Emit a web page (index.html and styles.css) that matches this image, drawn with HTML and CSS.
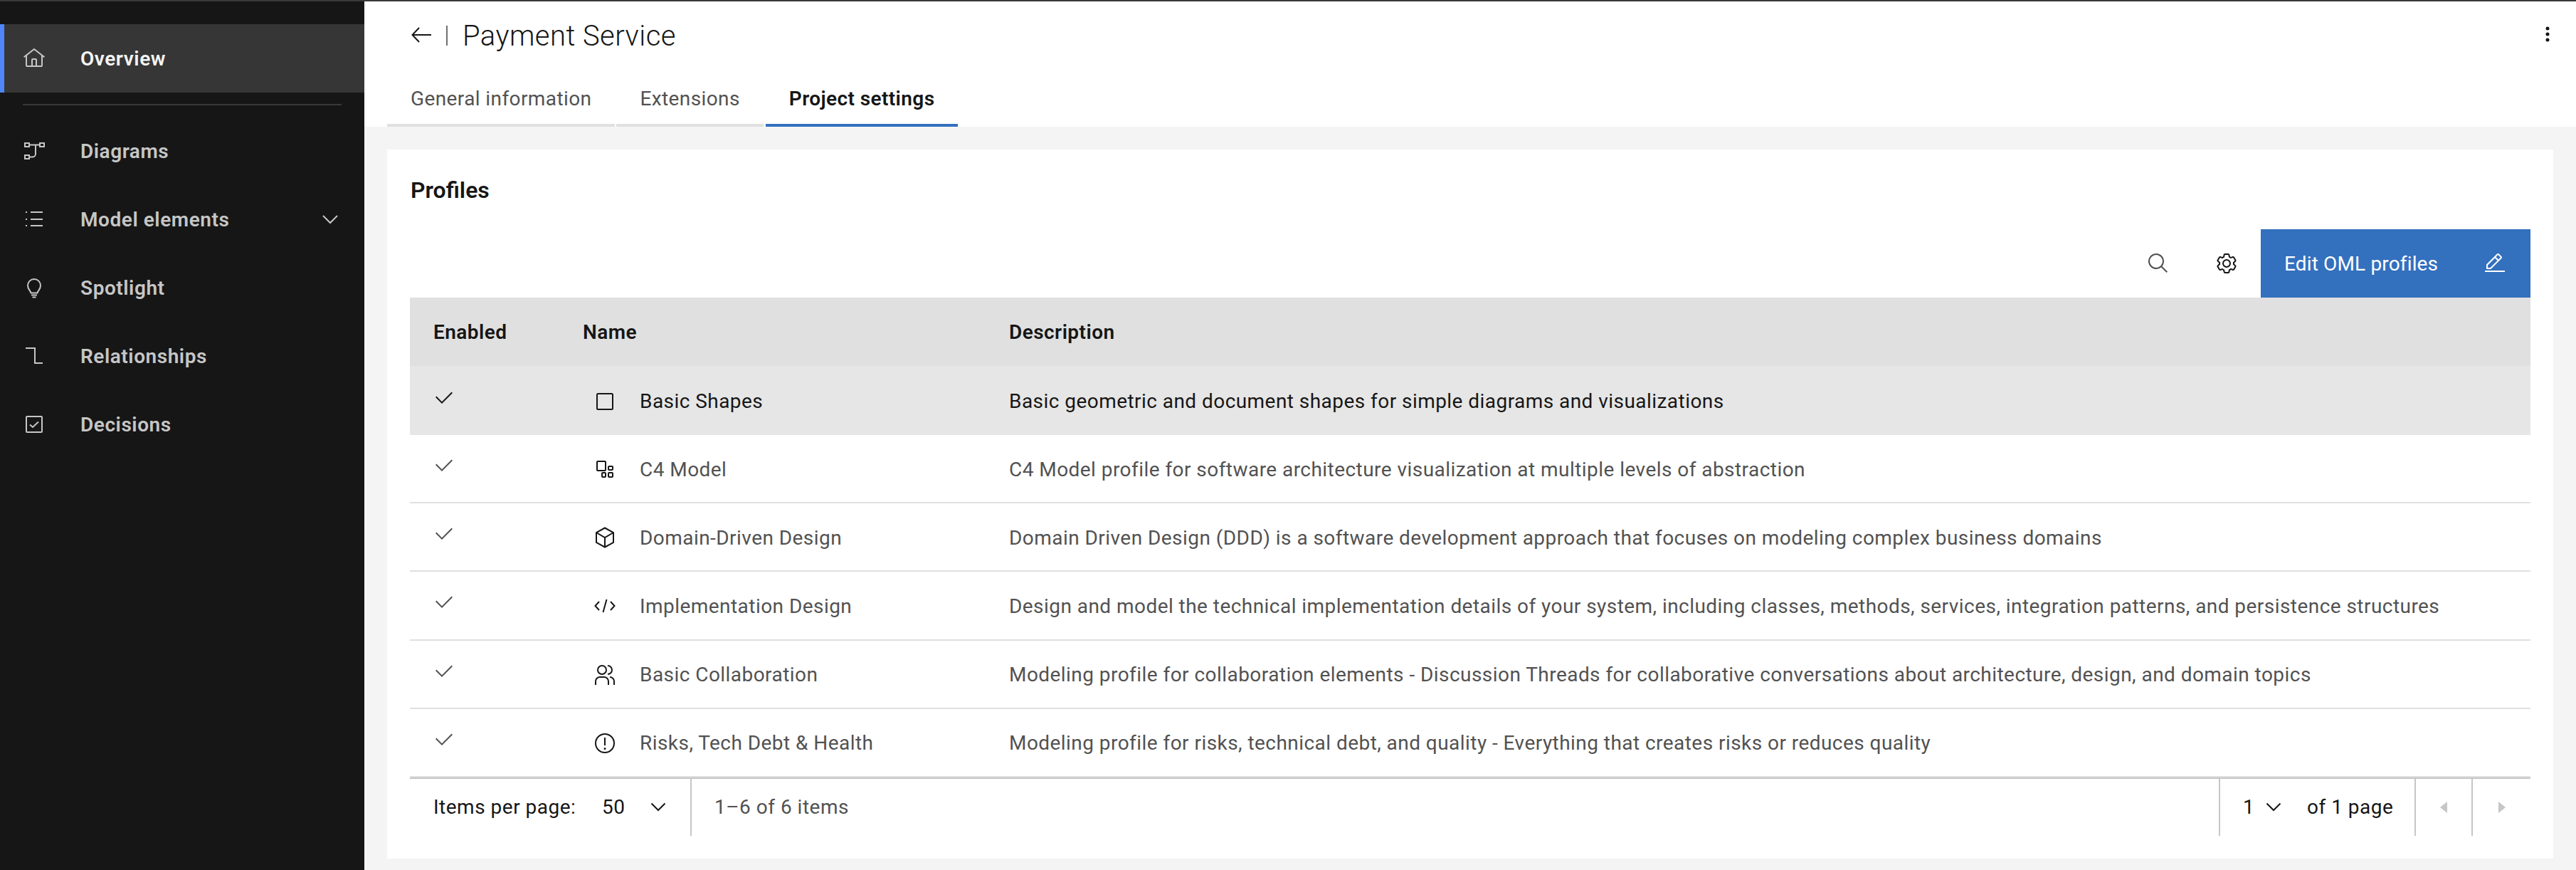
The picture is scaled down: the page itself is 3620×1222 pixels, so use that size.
FILE: index.html
```html
<!DOCTYPE html>
<html lang="en">
<head>
<meta charset="utf-8">
<title>Payment Service</title>
<link rel="stylesheet" href="styles.css">
</head>
<body>
<div class="app">
  <nav class="sidebar">
    <a class="nav-item active">
      <svg class="nav-icon" viewBox="0 0 32 32"><path class="fill" d="M16.612 2.214a1.01 1.01 0 0 0-1.242 0L1 13.419l1.243 1.572L4 13.621V26a2.004 2.004 0 0 0 2 2h20a2.004 2.004 0 0 0 2-2V13.63L29.757 15 31 13.428zM18 26h-4v-8h4zm2 0v-8a2.002 2.002 0 0 0-2-2h-4a2.002 2.002 0 0 0-2 2v8H6V12.062l10-7.79 10 7.8V26z"/></svg>
      <span>Overview</span>
    </a>
    <div class="nav-divider"></div>
    <a class="nav-item">
      <svg class="nav-icon" viewBox="0 0 32 32"><g class="line"><rect x="3" y="5" width="6" height="5"/><rect x="24" y="5" width="6" height="5"/><rect x="3" y="22" width="6" height="5"/><path d="M9 7.5H24M18 7.5V20a4.500 4.500 0 0 1-4.500 4.500H9"/></g></svg>
      <span>Diagrams</span>
    </a>
    <a class="nav-item">
      <svg class="nav-icon" viewBox="0 0 32 32"><g class="line"><path d="M11 6H28M11 16H28M11 25H28M4 6H6M4 16H6M4 25H6"/></g></svg>
      <span>Model elements</span>
      <svg class="nav-chevron" viewBox="0 0 24 14"><path class="line" d="M2 2L12 12L22 2"/></svg>
    </a>
    <a class="nav-item">
      <svg class="nav-icon" viewBox="0 0 32 32"><g class="line"><path d="M11.500 23.500C11 20.500 7 18.500 7 13a9 9 0 0 1 18 0C25 18.500 21 20.500 20.500 23.500Z"/><path d="M12 26.500H20M13.500 29.500H18.500"/></g></svg>
      <span>Spotlight</span>
    </a>
    <a class="nav-item">
      <svg class="nav-icon" viewBox="0 0 32 32"><path class="line" d="M4 5H17V26H28"/></svg>
      <span>Relationships</span>
    </a>
    <a class="nav-item">
      <svg class="nav-icon" viewBox="0 0 32 32"><g class="line"><rect x="5" y="5" width="22" height="22" rx="1"/><path d="M10 16.500L14 20L22 12.500"/></g></svg>
      <span>Decisions</span>
    </a>
  </nav>

  <div class="main">
    <header class="page-header">
      <div class="title-row">
        <svg class="back" viewBox="0 0 28 22"><path class="line dark" d="M28 11H2M11 1L1.500 11L11 21"/></svg>
        <span class="title-sep"></span>
        <h1 class="title">Payment Service</h1>
        <svg class="kebab" viewBox="0 0 6 22"><circle cx="3" cy="3" r="2.500"/><circle cx="3" cy="11" r="2.500"/><circle cx="3" cy="19" r="2.500"/></svg>
      </div>
      <div class="tabs">
        <a class="tab">General information</a>
        <a class="tab">Extensions</a>
        <a class="tab selected">Project settings</a>
      </div>
    </header>

    <div class="content">
      <section class="card">
        <h2 class="card-title">Profiles</h2>
        <div class="toolbar">
          <button class="tool-btn">
            <svg class="ico" viewBox="0 0 32 32"><path class="fill-gray" d="M29 27.586l-7.552-7.552a11.018 11.018 0 1 0-1.414 1.414L27.586 29zM4 13a9 9 0 1 1 9 9 9.01 9.01 0 0 1-9-9z"/></svg>
          </button>
          <button class="tool-btn">
            <svg class="ico" viewBox="0 0 32 32"><path class="fill-dark" d="M27 16.760c0-.25 0-.5 0-.76s0-.51 0-.77l1.920-1.680A2 2 0 0 0 29.300 11L26.940 7a2 2 0 0 0-1.730-1 2 2 0 0 0-.64.100l-2.430.820a11.350 11.350 0 0 0-1.310-.750l-.51-2.520a2 2 0 0 0-2-1.610h-4.680a2 2 0 0 0-2 1.610l-.51 2.520a11.480 11.480 0 0 0-1.320.750l-2.380-.860A2 2 0 0 0 6.790 6a2 2 0 0 0-1.730 1L2.700 11a2 2 0 0 0 .41 2.510L5 15.240c0 .25 0 .5 0 .76s0 .51 0 .77l-1.920 1.680A2 2 0 0 0 2.700 21l2.360 4a2 2 0 0 0 1.730 1 2 2 0 0 0 .64-.1l2.430-.82a11.350 11.350 0 0 0 1.310.750l.51 2.520a2 2 0 0 0 2 1.610h4.720a2 2 0 0 0 2-1.610l.51-2.520a11.480 11.480 0 0 0 1.320-.750l2.420.820a2 2 0 0 0 .64.1 2 2 0 0 0 1.730-1l2.280-4a2 2 0 0 0-.41-2.510ZM25.210 24l-3.430-1.160a8.860 8.860 0 0 1-2.710 1.570L18.360 28H13.640l-.71-3.550a9.360 9.360 0 0 1-2.700-1.570L6.790 24 4.430 20l2.720-2.400a8.900 8.900 0 0 1 0-3.130L4.430 12 6.790 8l3.430 1.160a8.860 8.860 0 0 1 2.710-1.570L13.640 4h4.720l.71 3.550a9.360 9.360 0 0 1 2.700 1.570L25.210 8l2.360 4-2.720 2.400a8.900 8.900 0 0 1 0 3.130L27.570 20Z"/><path class="fill-dark" d="M16 22a6 6 0 1 1 6-6A5.940 5.940 0 0 1 16 22Zm0-10a3.910 3.910 0 0 0-4 4 3.910 3.910 0 0 0 4 4 3.910 3.910 0 0 0 4-4A3.910 3.910 0 0 0 16 12Z"/></svg>
          </button>
          <button class="primary-btn">
            <span>Edit OML profiles</span>
            <svg class="ico" viewBox="0 0 32 32"><path class="fill-white" d="M2 26h28v2H2zM25.400 9c.8-.8.8-2 0-2.800l-3.600-3.600c-.8-.8-2-.8-2.800 0l-15 15V24h6.400l15-15zm-5-5L24 7.600l-3 3L17.400 7l3-3zM6 22v-3.600l10-10 3.600 3.600-10 10H6z"/></svg>
          </button>
        </div>

        <div class="table">
          <div class="row head">
            <div class="cell-en">Enabled</div>
            <div class="cell-name">Name</div>
            <div>Description</div>
          </div>

          <div class="row hover">
            <div class="cell-en"><svg class="ico check" viewBox="0 0 32 32"><path d="M13 24l-9-9 1.410-1.410L13 21.170 26.590 7.590 28 9z"/></svg></div>
            <div class="cell-name"><svg class="ico pi" viewBox="0 0 32 32"><rect class="line dark" x="5" y="5" width="22" height="22" rx="1.500"/></svg><span>Basic Shapes</span></div>
            <div>Basic geometric and document shapes for simple diagrams and visualizations</div>
          </div>

          <div class="row">
            <div class="cell-en"><svg class="ico check" viewBox="0 0 32 32"><path d="M13 24l-9-9 1.410-1.410L13 21.170 26.590 7.590 28 9z"/></svg></div>
            <div class="cell-name"><svg class="ico pi" viewBox="0 0 32 32"><g class="line dark"><rect x="5" y="5" width="12" height="13" rx="1"/><rect x="21" y="12" width="6" height="5" rx="1"/><rect x="12" y="21" width="5" height="6" rx="1"/><rect x="21" y="21" width="6" height="6" rx="1"/></g></svg><span>C4 Model</span></div>
            <div>C4 Model profile for software architecture visualization at multiple levels of abstraction</div>
          </div>

          <div class="row">
            <div class="cell-en"><svg class="ico check" viewBox="0 0 32 32"><path d="M13 24l-9-9 1.410-1.410L13 21.170 26.590 7.590 28 9z"/></svg></div>
            <div class="cell-name"><svg class="ico pi" viewBox="0 0 32 32"><g class="line dark"><path d="M16 2.500L28 9V23L16 29.500L4 23V9Z"/><path d="M4 9L16 16L28 9M16 16V29.500"/></g></svg><span>Domain-Driven Design</span></div>
            <div>Domain Driven Design (DDD) is a software development approach that focuses on modeling complex business domains</div>
          </div>

          <div class="row">
            <div class="cell-en"><svg class="ico check" viewBox="0 0 32 32"><path d="M13 24l-9-9 1.410-1.410L13 21.170 26.590 7.590 28 9z"/></svg></div>
            <div class="cell-name"><svg class="ico pi" viewBox="0 0 32 32"><g class="line dark"><path d="M8 10L2.500 16L8 22M24 10L29.500 16L24 22M18.500 7L13.500 25"/></g></svg><span>Implementation Design</span></div>
            <div>Design and model the technical implementation details of your system, including classes, methods, services, integration patterns, and persistence structures</div>
          </div>

          <div class="row">
            <div class="cell-en"><svg class="ico check" viewBox="0 0 32 32"><path d="M13 24l-9-9 1.410-1.410L13 21.170 26.590 7.590 28 9z"/></svg></div>
            <div class="cell-name"><svg class="ico pi" viewBox="0 0 32 32"><path class="fill-dark" d="M30 30h-2v-5a5.006 5.006 0 0 0-5-5v-2a7.008 7.008 0 0 1 7 7zM22 30h-2v-5a5.006 5.006 0 0 0-5-5H9a5.006 5.006 0 0 0-5 5v5H2v-5a7.008 7.008 0 0 1 7-7h6a7.008 7.008 0 0 1 7 7zM20 2v2a5 5 0 0 1 0 10v2a7 7 0 0 0 0-14zM12 4a5 5 0 1 1-5 5 5 5 0 0 1 5-5m0-2a7 7 0 1 0 7 7 7 7 0 0 0-7-7z"/></svg><span>Basic Collaboration</span></div>
            <div>Modeling profile for collaboration elements - Discussion Threads for collaborative conversations about architecture, design, and domain topics</div>
          </div>

          <div class="row">
            <div class="cell-en"><svg class="ico check" viewBox="0 0 32 32"><path d="M13 24l-9-9 1.410-1.410L13 21.170 26.590 7.590 28 9z"/></svg></div>
            <div class="cell-name"><svg class="ico pi" viewBox="0 0 32 32"><path class="fill-dark" d="M16 2a14 14 0 1 0 14 14A14 14 0 0 0 16 2zm0 26a12 12 0 1 1 12-12 12 12 0 0 1-12 12z"/><path class="fill-dark" d="M15 8h2v11h-2zM16 22a1.500 1.500 0 1 0 1.500 1.500A1.500 1.500 0 0 0 16 22z"/></svg><span>Risks, Tech Debt &amp; Health</span></div>
            <div>Modeling profile for risks, technical debt, and quality - Everything that creates risks or reduces quality</div>
          </div>
        </div>

        <footer class="pager">
          <div class="pager-size">
            <span class="pager-label">Items per page:</span>
            <span class="pager-value">50</span>
            <svg class="pager-chev" viewBox="0 0 22 13"><path class="line dark" d="M1.500 1.500L11 11L20.500 1.500"/></svg>
          </div>
          <div class="pager-count">1–6 of 6 items</div>
          <div class="pager-page">
            <span class="pager-num">1</span>
            <svg class="pager-chev" viewBox="0 0 22 13"><path class="line dark" d="M1.500 1.500L11 11L20.500 1.500"/></svg>
            <span class="pager-of">of 1 page</span>
          </div>
          <div class="pager-nav"><svg class="tri" viewBox="0 0 10 16"><path d="M10 0V16L0 8Z"/></svg></div>
          <div class="pager-nav last"><svg class="tri" viewBox="0 0 10 16"><path d="M0 0V16L10 8Z"/></svg></div>
        </footer>
      </section>
    </div>
  </div>
</div>
</body>
</html>
```

FILE: styles.css
```css
* { box-sizing: border-box; }
html, body { margin: 0; height: 100%; }
body {
  font-family: "Roboto", "Noto Sans", sans-serif;
  font-size: 28px;
  color: #161616;
  background: #f4f4f4;
}
.app {
  display: flex;
  width: 3620px;
  height: 1222px;
  border-top: 2px solid #393939;
  overflow: hidden;
}

/* icon paint */
.line { fill: none; stroke: #c6c6c6; stroke-width: 2; }
.line.dark { stroke: #161616; }
.fill { fill: #c6c6c6; }
.fill-gray { fill: #525252; }
.fill-dark { fill: #161616; }
.fill-white { fill: #fff; }
.ico { width: 32px; height: 32px; flex: none; display: block; }

/* sidebar */
.sidebar {
  width: 512px;
  flex: none;
  background: #161616;
  padding-top: 32px;
  display: flex;
  flex-direction: column;
}
.nav-item {
  height: 96px;
  display: flex;
  align-items: center;
  padding-left: 32px;
  color: #c6c6c6;
  font-weight: 600;
  letter-spacing: 0.55px;
  border-left: 0 solid transparent;
}
.nav-icon { width: 32px; height: 32px; flex: none; margin-right: 49px; }
.nav-item.active {
  background: #363636;
  color: #f4f4f4;
  border-left: 6px solid #4f86fb;
  padding-left: 26px;
}
.nav-chevron { width: 24px; height: 14px; margin-left: auto; margin-right: 36px; }
.nav-divider { height: 2px; background: #393939; margin: 16px 32px; }

/* main */
.main { flex: 1; min-width: 0; display: flex; flex-direction: column; }
.page-header { background: #fff; height: 176px; display: flex; flex-direction: column; }
.title-row {
  height: 96px;
  display: flex;
  align-items: center;
  padding-left: 66px;
}
.back { width: 28px; height: 22px; margin-top: -2px; }
.title-sep { width: 2px; height: 28px; background: #6f6f6f; margin: 0 21px 0 21px; }
.title { margin: 2px 0 0; font-size: 40px; font-weight: 300; line-height: 48px; color: #161616; letter-spacing: 0.45px; }
.kebab { width: 6px; height: 22px; margin-left: auto; margin-right: 37px; margin-top: -4px; fill: #161616; }
.tabs { display: flex; gap: 2px; padding-left: 32px; margin-top: auto; }
.tab {
  height: 76px;
  padding: 0 33px 0;
  display: flex;
  align-items: center;
  color: #525252;
  border-bottom: 4px solid #e0e0e0;
  letter-spacing: 0.4px;
}
.tab.selected { color: #161616; font-weight: 600; border-bottom-color: #3370be; margin-left: 1px; }

.content { flex: 1; padding: 32px 32px 16px; }
.card { background: #fff; height: 996px; padding: 32px 32px 0 32px; }
.card-title { margin: 0 0 30px 1px; font-size: 32px; font-weight: 600; line-height: 50px; }

.toolbar { display: flex; justify-content: flex-end; height: 96px; }
.tool-btn {
  width: 96px;
  border: 0;
  background: transparent;
  padding: 0;
  display: flex;
  align-items: center;
  justify-content: center;
}
.primary-btn {
  width: 379px;
  border: 0;
  padding: 0 34px 0 33px;
  background: #3370be;
  color: #fff;
  font: inherit;
  letter-spacing: 0.15px;
  display: flex;
  align-items: center;
  justify-content: space-between;
}

/* table */
.row {
  display: grid;
  grid-template-columns: 210px 599px 1fr;
  height: 96.2px;
  align-items: center;
  padding: 2px 0 0 33px;
  color: #525252;
  border-bottom: 2px solid #e0e0e0;
  letter-spacing: 0.45px;
}
.row.head {
  height: 96px;
  padding-top: 0;
  background: #e0e0e0;
  color: #161616;
  font-weight: 600;
  border-bottom: 0;
}
.row.hover { height: 97px; background: #e6e6e6; color: #161616; border-bottom: 0; }
.check { fill: #525252; margin: -10px 0 0 -1px; }
.hover .check { fill: #161616; }
.cell-name { display: flex; align-items: center; gap: 33px; }
.pi { margin-left: 15px; }

/* pager */
.pager {
  height: 82px;
  display: flex;
  align-items: stretch;
  border-top: 2px solid #c6c6c6;
  letter-spacing: 0.5px;
}
.pager > div { display: flex; align-items: center; }
.pager-size { width: 396px; padding-left: 33px; border-right: 2px solid #c6c6c6; }
.pager-label { width: 237px; flex: none; }
.pager-value { width: 68px; flex: none; }
.pager-chev { width: 22px; height: 13px; flex: none; }
.pager-count { flex: 1; padding-left: 32px; color: #525252; }
.pager-page { width: 277px; padding-left: 32px; border-left: 2px solid #c6c6c6; border-right: 2px solid #c6c6c6; }
.pager-num { width: 32px; flex: none; }
.pager-page .pager-of { margin-left: 36px; }
.pager-nav { width: 80px; justify-content: center; border-right: 2px solid #c6c6c6; }
.pager-nav.last { width: 81px; border-right: 0; }
.tri { width: 10px; height: 16px; fill: #c6c6c6; }
```
